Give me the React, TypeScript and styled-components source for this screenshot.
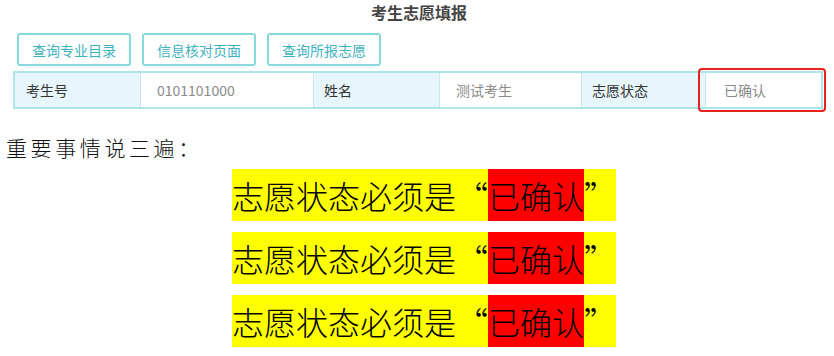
import React from "react";
import styled, { createGlobalStyle } from "styled-components";

const GlobalStyle = createGlobalStyle`
  html, body {
    margin: 0;
    padding: 0;
    background: #ffffff;
  }
  body {
    font-family: "Noto Sans CJK SC", "Liberation Sans", sans-serif;
    width: 834px;
    height: 356px;
    overflow: hidden;
  }
`;

const Page = styled.div`
  display: flex;
  flex-direction: column;
`;

const Title = styled.h1`
  margin: 0;
  padding-top: 2px;
  height: 31px;
  text-align: center;
  padding-left: 4px;
  font-size: 16px;
  line-height: 20px;
  font-weight: bold;
  color: #444;
`;

const Toolbar = styled.div`
  display: flex;
  gap: 11px;
  padding-left: 17px;
`;

const ToolButton = styled.button`
  width: 114px;
  height: 33px;
  box-sizing: border-box;
  background: #fff;
  border: 2px solid #86d9dc;
  border-radius: 3px;
  color: #3db2bf;
  font-family: inherit;
  font-size: 14px;
  padding: 0;
  cursor: pointer;
`;

const InfoTable = styled.div`
  position: relative;
  display: grid;
  grid-template-columns: 125px 173px 126px 142px 124px 1fr;
  margin: 5px 11px 0 13px;
  height: 38px;
  box-sizing: border-box;
  border: 2px solid #ace4e9;
`;

const Cell = styled.div<{ $label?: boolean; $pad: number }>`
  display: flex;
  align-items: center;
  padding-left: ${(p) => p.$pad}px;
  font-size: 14px;
  background: ${(p) => (p.$label ? "#e6f6fc" : "#ffffff")};
  color: ${(p) => (p.$label ? "#333" : "#8a8a8a")};
  border-left: 1px solid #c4eaf1;
  &:first-child {
    border-left: none;
  }
`;

const Marked = styled(Cell)`
  position: relative;
  &::after {
    content: "";
    position: absolute;
    left: -8px;
    right: -5px;
    top: -5px;
    bottom: -5px;
    border: 2px solid #e8231f;
    border-radius: 4px;
  }
`;

const Notice = styled.p`
  margin: 26px 0 0 6px;
  font-size: 21px;
  line-height: 24px;
  letter-spacing: 3.6px;
  color: #111;
  font-weight: 300;
`;

const Repeats = styled.div`
  display: flex;
  flex-direction: column;
  align-items: center;
  gap: 11px;
  margin-top: 10px;
  padding-left: 14px;
`;

const Banner = styled.div`
  display: flex;
  height: 52px;
  align-items: stretch;
  background: #ffff00;
  font-size: 32px;
  color: #000;
  font-weight: 300;
`;

const Words = styled.span`
  display: flex;
  align-items: center;
`;

const Quote = styled.span<{ $open?: boolean }>`
  display: flex;
  align-items: center;
  justify-content: ${(p) => (p.$open ? "flex-end" : "flex-start")};
  width: 32px;
`;

const Highlight = styled.span`
  display: flex;
  align-items: center;
  background: #ff0000;
`;

const banners = [0, 1, 2];

export default function App() {
  return (
    <Page>
      <GlobalStyle />
      <Title>考生志愿填报</Title>
      <Toolbar>
        <ToolButton>查询专业目录</ToolButton>
        <ToolButton>信息核对页面</ToolButton>
        <ToolButton>查询所报志愿</ToolButton>
      </Toolbar>
      <InfoTable>
        <Cell $label $pad={11}>考生号</Cell>
        <Cell $pad={16}>0101101000</Cell>
        <Cell $label $pad={10}>姓名</Cell>
        <Cell $pad={16}>测试考生</Cell>
        <Cell $label $pad={10}>志愿状态</Cell>
        <Marked $pad={18}>已确认</Marked>
      </InfoTable>
      <Notice>重要事情说三遍：</Notice>
      <Repeats>
        {banners.map((i) => (
          <Banner key={i}>
            <Words>志愿状态必须是</Words>
            <Quote $open>“</Quote>
            <Highlight>已确认</Highlight>
            <Quote>”</Quote>
          </Banner>
        ))}
      </Repeats>
    </Page>
  );
}
